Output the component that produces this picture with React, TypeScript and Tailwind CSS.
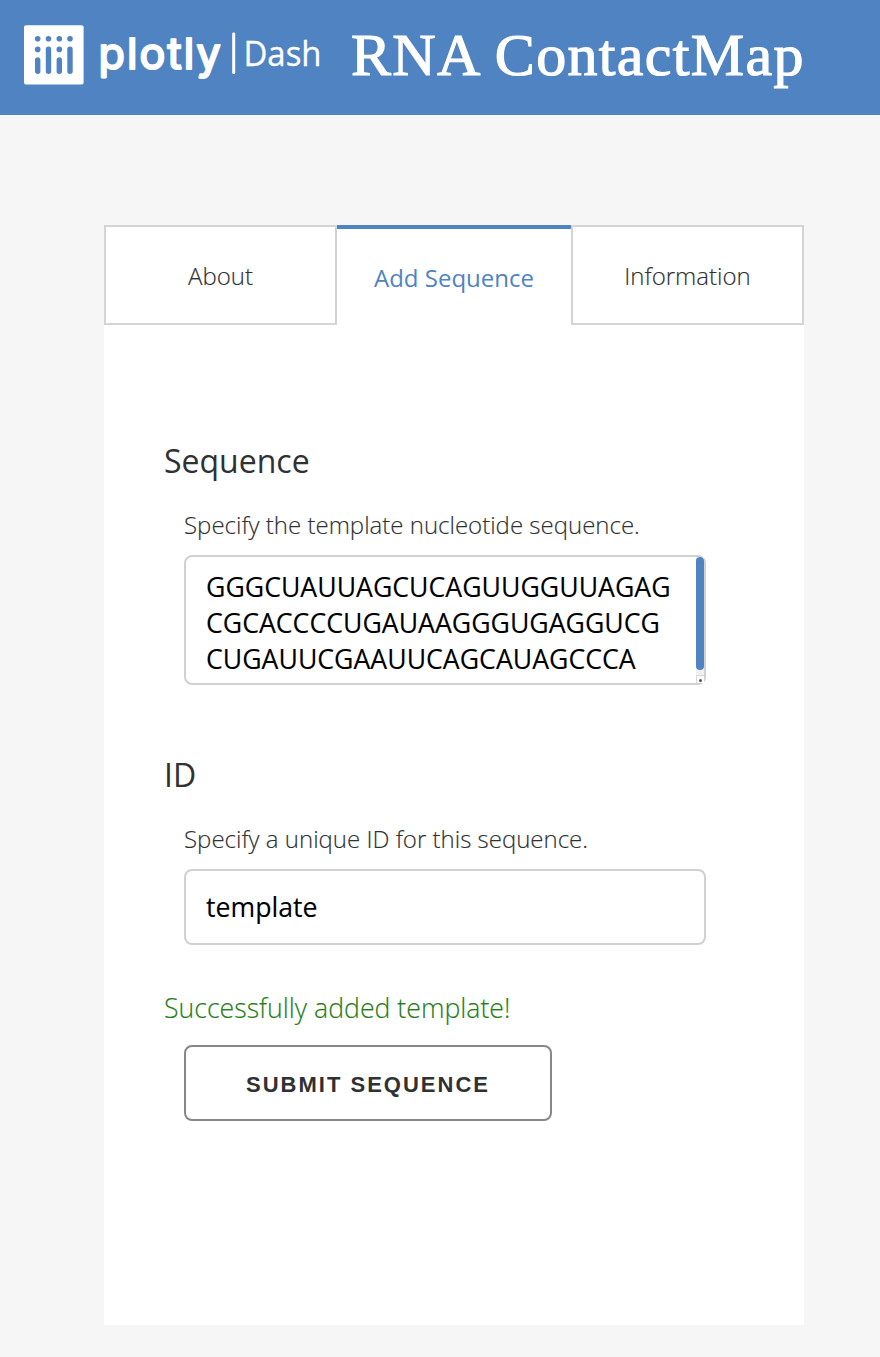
import React from "react";

function Logo() {
  return (
    <svg width="300" height="64" viewBox="24 24 300 64" fill="none" aria-label="plotly Dash">
      <rect x="24" y="25.3" width="59.6" height="59.2" rx="2" fill="#fff" />
      <g fill="#4f83c2">
        <circle cx="37.7" cy="38.7" r="2.8" />
        <circle cx="48.5" cy="38.7" r="2.8" />
        <circle cx="59.3" cy="38.7" r="2.8" />
        <circle cx="70" cy="38.7" r="2.8" />
        <circle cx="37.7" cy="49.4" r="2.8" />
        <circle cx="59.3" cy="49.4" r="2.8" />
        <rect x="35" y="57.3" width="5.4" height="16.7" rx="2.7" />
        <rect x="45.8" y="46.6" width="5.4" height="27.4" rx="2.7" />
        <rect x="56.6" y="57.3" width="5.4" height="16.7" rx="2.7" />
        <rect x="67.3" y="46.6" width="5.4" height="27.4" rx="2.7" />
      </g>
      <text
        x="98.6"
        y="68.8"
        textLength="122"
        lengthAdjust="spacing"
        className="fill-white stroke-white stroke-[2.2px] font-['Inter'] text-[43px] font-normal"
        strokeLinejoin="round"
        strokeLinecap="round"
      >
        plotly
      </text>
      <rect x="232.2" y="32.5" width="3" height="41.5" rx="1.2" fill="#fff" />
      <text
        x="243.5"
        y="65.7"
        textLength="78"
        lengthAdjust="spacingAndGlyphs"
        className="fill-white stroke-white stroke-[0.3px] font-['Open_Sans'] text-[34px]"
      >
        Dash
      </text>
    </svg>
  );
}

function Tab({ label, active = false }: { label: string; active?: boolean }) {
  return (
    <button
      className={
        active
          ? "h-[100px] w-[234px] border-t-4 border-[#4f83c2] bg-white pt-[2px] text-[24px] font-normal text-[#4f83c2]"
          : "h-[100px] w-[233px] border-2 border-[#d3d4d3] bg-white pt-[2px] text-[24px] font-light [-webkit-text-stroke:0.15px_#303132]"
      }
    >
      {label}
    </button>
  );
}

export default function App() {
  return (
    <div className="h-[1357px] w-[880px] bg-[#f6f6f6] font-['Open_Sans',sans-serif] text-[#303132]">
      <header className="flex h-[115px] items-start bg-[#4f83c2] pl-6 text-white">
        <div className="pt-6">
          <Logo />
        </div>
        <h1 className="ml-[27px] pt-[20px] font-['Liberation_Serif',serif] text-[60px] leading-[70px] tracking-[1.35px] whitespace-nowrap [-webkit-text-stroke:1.2px_white]">
          RNA ContactMap
        </h1>
      </header>
      <main className="mt-[110px] ml-[104px] h-[1100px] w-[700px] bg-white">
        <nav className="flex">
          <Tab label="About" />
          <Tab label="Add Sequence" active />
          <Tab label="Information" />
        </nav>
        <form className="flex flex-col items-start pt-[112px] pl-[60px]">
          <h2 className="text-[32px] leading-[48px]">Sequence</h2>
          <label className="mt-[22px] ml-5 text-[24px] leading-[36px] font-light [-webkit-text-stroke:0.15px_#303132]">
            Specify the template nucleotide sequence.
          </label>
          <div className="relative mt-[12px] ml-5 h-[130px] w-[522px]">
            <textarea
              className="block h-full w-full resize-none overflow-hidden rounded-lg border-2 border-[#d1d1d1] bg-white px-5 pt-[12px] text-[26.67px] leading-[36px] text-black outline-none [-webkit-text-stroke:0.1px_black]"
              spellCheck={false}
              readOnly
              value={"GGGCUAUUAGCUCAGUUGGUUAGAG\nCGCACCCCUGAUAAGGGUGAGGUCG\nCUGAUUCGAAUUCAGCAUAGCCCA"}
            />
            <div className="absolute top-[2px] right-[2px] flex h-[126px] w-2 flex-col bg-[#f1f1f1]">
              <div className="h-[113px] rounded-full bg-[#4f83c2]" />
              <div className="mt-auto flex h-2 items-center justify-center border-t border-l border-[#d8d8d8] bg-white">
                <div className="mt-[2px] size-[3px] rounded-full bg-[#555]" />
              </div>
            </div>
          </div>
          <h2 className="mt-[66px] text-[32px] leading-[48px]">ID</h2>
          <label className="mt-[22px] ml-5 text-[24px] leading-[36px] font-light [-webkit-text-stroke:0.15px_#303132]">
            Specify a unique ID for this sequence.
          </label>
          <input
            className="mt-[12px] ml-5 h-[76px] w-[522px] rounded-lg border-2 border-[#d1d1d1] bg-white px-5 pb-[2px] text-[26.67px] text-black outline-none [-webkit-text-stroke:0.1px_black]"
            readOnly
            value="template"
          />
          <p className="mt-[41px] text-[26.67px] leading-[44px] font-light text-[#267d16] [-webkit-text-stroke:0.15px_#267d16]">
            Successfully added template!
          </p>
          <button
            type="button"
            className="mt-[15px] ml-5 h-[76px] w-[368px] rounded-lg border-2 border-[#888] bg-white pt-[2px] font-['Liberation_Sans',sans-serif] text-[22px] font-bold tracking-[2px] whitespace-nowrap"
          >
            SUBMIT SEQUENCE
          </button>
        </form>
      </main>
    </div>
  );
}
